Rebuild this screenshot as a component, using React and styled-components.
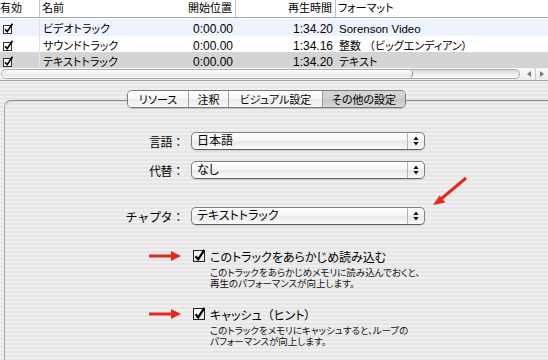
import React from "react";
import styled, { createGlobalStyle } from "styled-components";

const pinstripe = `repeating-linear-gradient(to bottom, #eeeeee 0px, #eeeeee 2px, #e6e6e6 2px, #e6e6e6 4px)`;

const GlobalStyle = createGlobalStyle`
  html, body { margin: 0; padding: 0; }
  body {
    width: 548px;
    height: 360px;
    overflow: hidden;
    background: ${pinstripe};
    font-family: "Liberation Sans", "Noto Sans CJK JP", sans-serif;
    font-feature-settings: "palt" 1;
    color: #000;
  }
`;

const COLS = "40px 120px 76px 100px 1fr";

const Root = styled.div`
  width: 548px;
  height: 360px;
  display: flex;
  flex-direction: column;
  overflow: hidden;
`;

const Table = styled.div`
  background: #fff;
`;

const HeaderRow = styled.div`
  display: grid;
  grid-template-columns: ${COLS};
  height: 17px;
  border-bottom: 1px solid #a3a3a3;
  font-size: 11px;
  line-height: 17px;
`;

const HeaderCell = styled.div`
  padding: ${(p) => (p.$right ? "0 3px 0 0" : `0 0 0 ${p.$pad || 0}px`)};
  text-align: ${(p) => (p.$right ? "right" : "left")};
  border-right: ${(p) => (p.$divider ? "1px solid #c4c4c4" : "none")};
  white-space: nowrap;
`;

const Rows = styled.div`
  height: 50px;
  padding-top: 1px;
  box-sizing: border-box;
  overflow: hidden;
`;

const Row = styled.div`
  display: grid;
  grid-template-columns: ${COLS};
  height: ${(p) => p.$h || 16}px;
  flex-shrink: 0;
  background: ${(p) =>
    p.$tone === "blue" ? "#edf3fe" : p.$tone === "sel" ? "#d4d4d4" : "#ffffff"};
`;

const Cell = styled.div`
  padding: ${(p) => (p.$right ? "4px 3px 0 0" : `4px 0 0 ${p.$pad || 0}px`)};
  text-align: ${(p) => (p.$right ? "right" : "left")};
  font-size: ${(p) => p.$size || 11}px;
  line-height: 13px;
  white-space: nowrap;
  border-right: ${(p) => (p.$divider ? "1px solid #e2e2e2" : "none")};
`;

const NoPalt = styled.span`
  font-feature-settings: normal;
`;

const Scrollbar = styled.div`
  display: flex;
  align-items: center;
  height: 12px;
  background: linear-gradient(#fafafa, #ececec);
  border-bottom: 1px solid #a8a8a8;
`;

const Track = styled.div`
  width: 521px;
  height: 10px;
  margin-left: 1px;
  border: 1px solid #ababab;
  border-radius: 6px;
  box-sizing: border-box;
  background: linear-gradient(#d8d8d8, #f2f2f2 60%, #fbfbfb);
  display: flex;
  overflow: hidden;
`;

const Thumb = styled.div`
  width: 411px;
  height: 100%;
  box-sizing: border-box;
  border-right: 1px solid #8f8f8f;
  border-radius: 6px;
  background: linear-gradient(#ffffff, #f3f3f3 50%, #e6e6e6 55%, #fafafa);
`;

const ArrowBox = styled.div`
  display: flex;
  margin-left: 3px;
  height: 12px;
`;

const ArrowBtn = styled.div`
  width: 12px;
  display: flex;
  align-items: center;
  justify-content: center;
  border-left: ${(p) => (p.$div ? "1px solid #c8c8c8" : "none")};
`;

const Tabs = styled.div`
  display: flex;
  align-self: flex-start;
  margin: 9px 0 -8px 127px;
  height: 18px;
  box-sizing: border-box;
  border: 1px solid #7a7a7a;
  border-radius: 5px;
  overflow: hidden;
  position: relative;
  z-index: 1;
  box-shadow: 0 1px 1px rgba(0, 0, 0, 0.18);
`;

const Tab = styled.div`
  width: ${(p) => p.$w}px;
  display: flex;
  align-items: center;
  justify-content: center;
  font-size: 11px;
  border-left: ${(p) => (p.$first ? "none" : "1px solid #9d9d9d")};
  background: ${(p) =>
    p.$active
      ? "linear-gradient(#d6d6d6, #cfcfcf 50%, #c6c6c6 52%, #d8d8d8)"
      : "linear-gradient(#ffffff, #f6f6f6 50%, #ebebeb 52%, #f8f8f8)"};
`;

const Panel = styled.div`
  flex: 1;
  margin-left: 4px;
  position: relative;
  border-top: 1px solid #8d8d8d;
  border-left: 1px solid #a9a9a9;
  border-top-left-radius: 7px;
  background: ${pinstripe};
  padding-top: 31px;
  box-shadow: inset 0 1px 1px rgba(0, 0, 0, 0.06);
`;

const FormRow = styled.div`
  display: flex;
  align-items: center;
  height: 18px;
  margin-top: ${(p) => p.$mt || 0}px;
`;

const Label = styled.div`
  width: 182px;
  box-sizing: border-box;
  padding-right: 3px;
  text-align: right;
  font-size: 12px;
  margin-right: 4px;
  white-space: nowrap;
  font-feature-settings: normal;
  letter-spacing: -0.3px;
`;

const Popup = styled.div`
  width: 234px;
  height: 18px;
  box-sizing: border-box;
  border: 1px solid #808080;
  border-bottom-color: #5e5e5e;
  border-radius: 5px;
  display: flex;
  background: linear-gradient(#ffffff, #f5f5f5 45%, #e8e8e8 55%, #fbfbfb);
  box-shadow: 0 1px 1px rgba(0, 0, 0, 0.12);
`;

const PopupText = styled.div`
  flex: 1;
  padding-left: 5px;
  font-size: 12px;
  line-height: 16px;
  white-space: nowrap;
`;

const PopupArrows = styled.div`
  width: 16px;
  border-left: 1px solid #b4b4b4;
  display: flex;
  align-items: center;
  justify-content: center;
`;

const CheckItem = styled.div`
  position: relative;
  margin-left: 188px;
  margin-top: ${(p) => p.$mt}px;
`;

const CheckLine = styled.div`
  display: flex;
  align-items: center;
  height: 12px;
  gap: 5px;
  font-size: 12px;
`;

const Desc = styled.div`
  margin: 5px 0 0 17px;
  font-size: 9.5px;
  line-height: 11px;
  color: #111;
`;

const RedArrow = styled.svg`
  position: absolute;
  left: -44px;
  top: 0px;
`;

const DiagArrow = styled.svg`
  position: absolute;
  left: 423px;
  top: 73px;
`;

const SmallCheck = () => (
  <svg width="11" height="11" viewBox="0 0 11 11" style={{ display: "block" }}>
    <rect x="0.5" y="2.5" width="8" height="8" fill="#fff" stroke="#333" />
    <path d="M2 6.2 L4.2 8.6 L9.5 0.8" fill="none" stroke="#000" strokeWidth="1.6" />
  </svg>
);

const BigCheck = () => (
  <svg width="12" height="13" viewBox="0 0 12 13" style={{ display: "block", marginTop: "-1px" }}>
    <defs>
      <linearGradient id="cbg" x1="0" y1="0" x2="0" y2="1">
        <stop offset="0" stopColor="#ffffff" />
        <stop offset="1" stopColor="#e4e4e4" />
      </linearGradient>
    </defs>
    <rect x="0.5" y="1.5" width="11" height="11" fill="url(#cbg)" stroke="#222" />
    <path d="M2.6 7.2 L5.2 10.4 L11.4 0.8" fill="none" stroke="#000" strokeWidth="2.2" />
  </svg>
);

const UpDown = () => (
  <svg width="6" height="10" viewBox="0 0 6 10">
    <path d="M3 0.5 L5.6 4 L0.4 4 Z" fill="#111" />
    <path d="M3 9.5 L5.6 6 L0.4 6 Z" fill="#111" />
  </svg>
);

const Tri = ({ dir }) => (
  <svg width="4" height="6" viewBox="0 0 4 6">
    {dir === "left" ? <path d="M0 3 L4 0 L4 6 Z" fill="#777" /> : <path d="M4 3 L0 0 L0 6 Z" fill="#777" />}
  </svg>
);

const HArrow = () => (
  <RedArrow width="34" height="12" viewBox="0 0 34 12">
    <line x1="0" y1="6" x2="24" y2="6" stroke="#e52a1c" strokeWidth="3" />
    <path d="M22 1 L32 6 L22 11 Z" fill="#e52a1c" />
  </RedArrow>
);

const rows = [
  { name: "ビデオトラック", start: "0:00.00", dur: "1:34.20", fmt: "Sorenson Video", latin: true, tone: "blue", h: 17 },
  { name: "サウンドトラック", start: "0:00.00", dur: "1:34.16", fmt: <>整数 <NoPalt>（</NoPalt>ビッグエンディアン）</>, tone: "white", h: 16 },
  { name: "テキストトラック", start: "0:00.00", dur: "1:34.20", fmt: "テキスト", tone: "sel", h: 17 },
];

export default function App() {
  return (
    <Root>
      <GlobalStyle />
      <Table>
        <HeaderRow>
          <HeaderCell $divider>有効</HeaderCell>
          <HeaderCell $pad={2}>名前</HeaderCell>
          <HeaderCell $right $divider>開始位置</HeaderCell>
          <HeaderCell $right $divider>再生時間</HeaderCell>
          <HeaderCell $pad={2}>フォーマット</HeaderCell>
        </HeaderRow>
        <Rows>
          {rows.map((r) => (
            <Row key={r.name} $tone={r.tone} $h={r.h}>
              <Cell $pad={3} $divider>
                <SmallCheck />
              </Cell>
              <Cell $pad={3}>{r.name}</Cell>
              <Cell $right $size={12}>{r.start}</Cell>
              <Cell $right $size={12}>{r.dur}</Cell>
              <Cell $pad={3} $size={r.latin ? 11.5 : 11}>{r.fmt}</Cell>
            </Row>
          ))}
        </Rows>
      </Table>
      <Scrollbar>
        <Track>
          <Thumb />
        </Track>
        <ArrowBox>
          <ArrowBtn>
            <Tri dir="left" />
          </ArrowBtn>
          <ArrowBtn $div>
            <Tri dir="right" />
          </ArrowBtn>
        </ArrowBox>
      </Scrollbar>
      <Tabs>
        <Tab $w={60} $first>リソース</Tab>
        <Tab $w={39}>注釈</Tab>
        <Tab $w={93}>ビジュアル設定</Tab>
        <Tab $w={82} $active>その他の設定</Tab>
      </Tabs>
      <Panel>
        <FormRow>
          <Label>言語：</Label>
          <Popup>
            <PopupText>日本語</PopupText>
            <PopupArrows>
              <UpDown />
            </PopupArrows>
          </Popup>
        </FormRow>
        <FormRow $mt={11}>
          <Label>代替：</Label>
          <Popup>
            <PopupText>なし</PopupText>
            <PopupArrows>
              <UpDown />
            </PopupArrows>
          </Popup>
        </FormRow>
        <FormRow $mt={28}>
          <Label>チャプタ：</Label>
          <Popup>
            <PopupText>テキストトラック</PopupText>
            <PopupArrows>
              <UpDown />
            </PopupArrows>
          </Popup>
        </FormRow>
        <DiagArrow width="42" height="36" viewBox="0 0 42 36">
          <line x1="38" y1="4" x2="13" y2="25" stroke="#e52a1c" strokeWidth="3" />
          <path d="M5 31 L17.5 28.5 L11.5 21.5 Z" fill="#e52a1c" />
        </DiagArrow>
        <CheckItem $mt={25}>
          <HArrow />
          <CheckLine>
            <BigCheck />
            <span>このトラックをあらかじめ読み込む</span>
          </CheckLine>
          <Desc>
            このトラックをあらかじめメモリに読み込んでおくと、
            <br />
            再生のパフォーマンスが向上します。
          </Desc>
        </CheckItem>
        <CheckItem $mt={19}>
          <HArrow />
          <CheckLine>
            <BigCheck />
            <span>
              キャッシュ<NoPalt>（</NoPalt>ヒント）
            </span>
          </CheckLine>
          <Desc>
            このトラックをメモリにキャッシュすると、ループの
            <br />
            パフォーマンスが向上します。
          </Desc>
        </CheckItem>
      </Panel>
    </Root>
  );
}
